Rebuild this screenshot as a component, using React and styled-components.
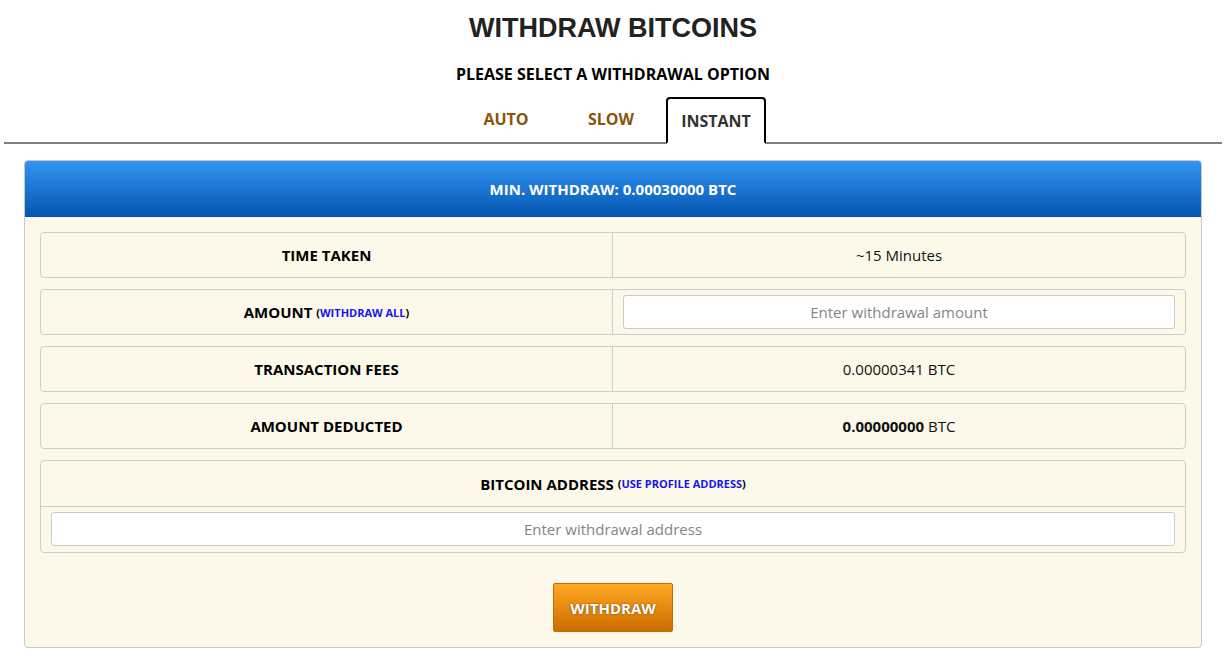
import React, { useState } from "react";
import styled, { createGlobalStyle } from "styled-components";

const GlobalStyle = createGlobalStyle`
  * { box-sizing: border-box; }
  body {
    margin: 0;
    background: #fff;
    font-family: "Open Sans", "DejaVu Sans", sans-serif;
    color: #000;
  }
`;

const TABS = ["AUTO", "SLOW", "INSTANT"];

const App = () => {
  const [tab, setTab] = useState("INSTANT");

  return (
    <Page>
      <GlobalStyle />
      <Title>WITHDRAW BITCOINS</Title>
      <Subtitle>PLEASE SELECT A WITHDRAWAL OPTION</Subtitle>
      <TabBar>
        {TABS.map(t => (
          <Tab key={t} $active={t === tab} onClick={() => setTab(t)}>
            {t}
          </Tab>
        ))}
      </TabBar>

      <Panel>
        <PanelHeader>MIN. WITHDRAW: 0.00030000 BTC</PanelHeader>
        <PanelBody>
          <Row>
            <Label>TIME TAKEN</Label>
            <Value>~15 Minutes</Value>
          </Row>
          <Row>
            <Label>
              AMOUNT <SmallLink>(<a>WITHDRAW ALL</a>)</SmallLink>
            </Label>
            <Value $input>
              <Input placeholder="Enter withdrawal amount" />
            </Value>
          </Row>
          <Row>
            <Label>TRANSACTION FEES</Label>
            <Value>0.00000341 BTC</Value>
          </Row>
          <Row>
            <Label>AMOUNT DEDUCTED</Label>
            <Value>
              <b>0.00000000</b>&nbsp;BTC
            </Value>
          </Row>
          <AddressBox>
            <AddressHead>
              BITCOIN ADDRESS <SmallLink>(<a>USE PROFILE ADDRESS</a>)</SmallLink>
            </AddressHead>
            <AddressBody>
              <Input placeholder="Enter withdrawal address" />
            </AddressBody>
          </AddressBox>
          <ButtonRow>
            <WithdrawButton>WITHDRAW</WithdrawButton>
          </ButtonRow>
        </PanelBody>
      </Panel>
    </Page>
  );
};

export default App;

const Page = styled.div`
  padding: 0 2px 0 4px;
`;

const Title = styled.h1`
  margin: 0;
  padding-top: 10px;
  font-family: "Liberation Sans", Arial, sans-serif;
  font-size: 27px;
  line-height: 36px;
  font-weight: 700;
  color: #222;
  text-align: center;
`;

const Subtitle = styled.h2`
  margin: 17px 0 0;
  font-size: 16px;
  line-height: 22px;
  font-weight: 700;
  text-align: center;
`;

const TabBar = styled.div`
  display: flex;
  justify-content: center;
  gap: 5px;
  margin-top: 12px;
  padding-right: 4px;
  border-bottom: 2px solid #808080;
`;

const Tab = styled.div`
  width: 100px;
  margin-bottom: -2px;
  padding: ${({ $active }) => ($active ? "11px 0 10px" : "9px 0 12px")};
  border: 2px solid ${({ $active }) => ($active ? "#000" : "transparent")};
  border-bottom-color: transparent;
  border-radius: 4px 4px 0 0;
  background: ${({ $active }) => ($active ? "#fff" : "transparent")};
  color: ${({ $active }) => ($active ? "#333" : "#8a5508")};
  font-size: 16px;
  line-height: 22px;
  font-weight: 700;
  text-align: center;
  cursor: pointer;
`;

const Panel = styled.div`
  margin: 16px 20px 0;
  border: 1px solid #c8c8c8;
  border-radius: 4px;
  background: #fcf9eb;
  overflow: hidden;
`;

const PanelHeader = styled.div`
  height: 56px;
  display: flex;
  align-items: center;
  justify-content: center;
  background: linear-gradient(to bottom, #3494f2, #0457b2);
  border-bottom: 1px solid #0a52a4;
  color: #fff;
  font-size: 15px;
  font-weight: 700;
`;

const PanelBody = styled.div`
  display: flex;
  flex-direction: column;
  gap: 11px;
  padding: 15px 15px 15px;
`;

const Row = styled.div`
  display: grid;
  grid-template-columns: 1fr 1fr;
  height: 46px;
  border: 1px solid #cdcdcd;
  border-radius: 4px;
`;

const Label = styled.div`
  display: flex;
  align-items: center;
  justify-content: center;
  border-right: 1px solid #cdcdcd;
  font-size: 15px;
  font-weight: 700;
  white-space: pre;
`;

const Value = styled.div`
  display: flex;
  align-items: center;
  justify-content: center;
  padding: ${({ $input }) => ($input ? "0 10px" : "0")};
  font-size: 15px;
  color: #111;
`;

const SmallLink = styled.span`
  font-size: 11px;
  font-weight: 700;

  a {
    color: #1515f0;
    cursor: pointer;
  }
`;

const Input = styled.input`
  width: 100%;
  height: 34px;
  padding: 0 10px;
  border: 1px solid #cbcbcb;
  border-radius: 3px;
  background: #fff;
  font-family: "Open Sans", "DejaVu Sans", sans-serif;
  font-size: 15px;
  text-align: center;
  outline: none;

  &::placeholder {
    color: #858585;
  }
`;

const AddressBox = styled.div`
  border: 1px solid #cdcdcd;
  border-radius: 4px;
`;

const AddressHead = styled.div`
  height: 46px;
  display: flex;
  align-items: center;
  justify-content: center;
  border-bottom: 1px solid #cdcdcd;
  font-size: 15px;
  font-weight: 700;
  white-space: pre;
`;

const AddressBody = styled.div`
  padding: 5px 10px 6px;
`;

const ButtonRow = styled.div`
  display: flex;
  justify-content: center;
  margin-top: 19px;
`;

const WithdrawButton = styled.button`
  width: 120px;
  height: 49px;
  border: 1px solid #c46a05;
  border-radius: 2px;
  background: linear-gradient(to bottom, #fea923, #cd6c00);
  color: #fff;
  font-family: "Open Sans", "DejaVu Sans", sans-serif;
  font-size: 15px;
  font-weight: 700;
  text-shadow: 0 0 2px rgba(80, 40, 0, 0.8);
  cursor: pointer;
`;
